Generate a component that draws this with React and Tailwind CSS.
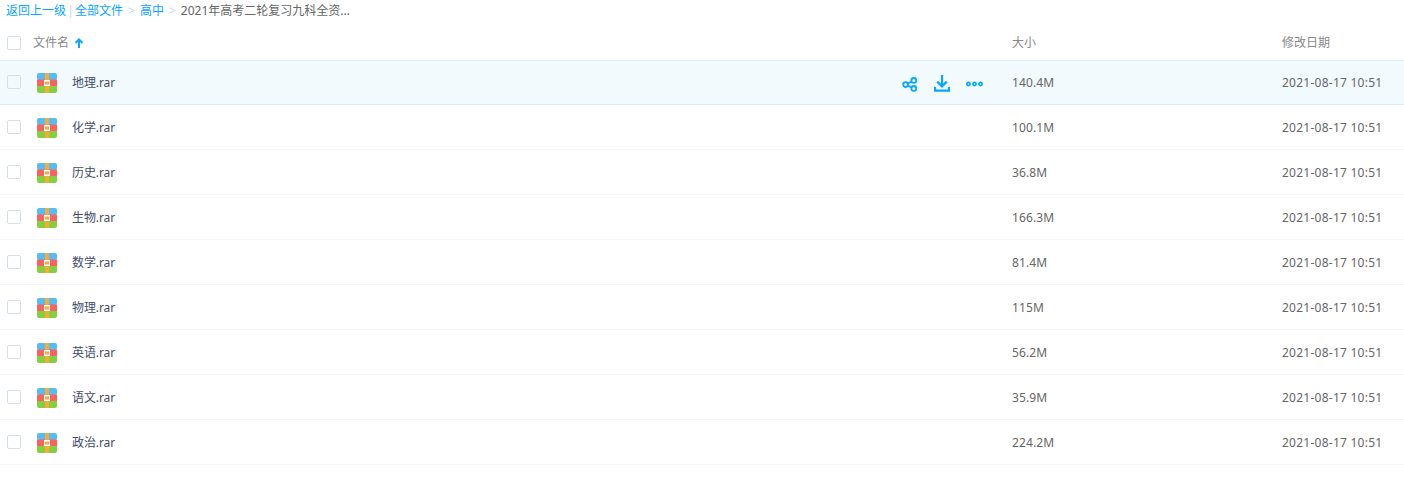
import { useState } from 'react';

const files = [
  { name: '地理.rar', size: '140.4M' },
  { name: '化学.rar', size: '100.1M' },
  { name: '历史.rar', size: '36.8M' },
  { name: '生物.rar', size: '166.3M' },
  { name: '数学.rar', size: '81.4M' },
  { name: '物理.rar', size: '115M' },
  { name: '英语.rar', size: '56.2M' },
  { name: '语文.rar', size: '35.9M' },
  { name: '政治.rar', size: '224.2M' },
];

const checkbox = "w-[14px] h-[14px] rounded-[2px] border border-[#d5dfea] bg-transparent shrink-0";

function RarIcon() {
  return (
    <svg width="20" height="20" viewBox="0 0 20 20" className="shrink-0">
      <rect x="0" y="0" width="20" height="7" rx="2" fill="#55bdf5" />
      <rect x="0" y="6.5" width="20" height="7" fill="#f9625f" />
      <rect x="0" y="13" width="20" height="7" rx="2" fill="#84cf3f" />
      <rect x="0" y="13" width="20" height="3" fill="#84cf3f" />
      <rect x="8" y="0" width="4" height="20" fill="#fbaa36" />
      <rect x="7" y="7" width="6" height="6" fill="#fff" />
      <rect x="8" y="8.5" width="4" height="3" fill="#fbaa36" />
    </svg>
  );
}

function ShareIcon() {
  return (
    <svg width="16" height="16" viewBox="0 0 16 16" fill="none" stroke="#06a7ff" strokeWidth="1.8">
      <circle cx="3.6" cy="8.6" r="2.4" />
      <circle cx="11.8" cy="4.4" r="2.4" />
      <circle cx="11.8" cy="12.4" r="2.4" />
      <path d="M5.8 7.5 9.6 5.5M5.8 9.7 9.6 11.3" />
    </svg>
  );
}

function DownloadIcon() {
  return (
    <svg width="16" height="17" viewBox="0 0 16 17" fill="none" stroke="#06a7ff" strokeWidth="2.2">
      <path d="M8 0v11M3.2 6.6 8 11.4 12.8 6.6" />
      <path d="M1 12v3.6h14V12" strokeWidth="2.2" />
    </svg>
  );
}

function MoreIcon() {
  return (
    <svg width="17" height="6" viewBox="0 0 17 6" fill="none" stroke="#06a7ff" strokeWidth="1.7">
      <circle cx="2.5" cy="3" r="1.6" />
      <circle cx="8.5" cy="3" r="1.6" />
      <circle cx="14.5" cy="3" r="1.6" />
    </svg>
  );
}

function Row({ file, active }) {
  return (
    <div className={`flex items-center h-[45px] border-t border-b ${active ? 'bg-[#f3fafe] border-[#dcedfa]' : 'border-t-transparent border-b-[#f2f6fd]'}`}>
      <div className="w-[33px] pl-[7px] flex -mt-[2px]">
        <span className={checkbox} />
      </div>
      <div className="w-[979px] flex items-center">
        <span className="ml-[4px] mt-[1px] flex"><RarIcon /></span>
        <span className="ml-[15px] text-[#424e67] tracking-[-0.1px]">{file.name}</span>
        {active && (
          <div className="ml-auto mr-[29px] flex items-center gap-4 mt-[2px]">
            <ShareIcon />
            <DownloadIcon />
            <MoreIcon />
          </div>
        )}
      </div>
      <div className="w-[270px] text-[#666] tracking-[0.1px]">{file.size}</div>
      <div className="text-[#666] tracking-[0.25px]">2021-08-17 10:51</div>
    </div>
  );
}

export default function App() {
  const [sortAsc] = useState(true);

  return (
    <div className="w-[1404px] h-[480px] bg-white text-xs font-['Noto_Sans','Noto_Sans_CJK_SC',sans-serif] overflow-hidden">
      <div className="flex items-center h-[21px] pl-[6px] text-[#666]">
        <span className="text-[#06a7ff]">返回上一级</span>
        <span className="w-[9px] text-center text-[#c4d8f4]">|</span>
        <span className="text-[#06a7ff]">全部文件</span>
        <span className="mx-[5px] text-[#c4d8f4]">&gt;</span>
        <span className="text-[#06a7ff]">高中</span>
        <span className="mx-[5px] text-[#c4d8f4]">&gt;</span>
        <span>2021年高考二轮复习九科全资...</span>
      </div>
      <div className="flex items-center h-[39px] pt-[5px] text-[#888]">
        <div className="w-[33px] pl-[7px] flex">
          <span className={checkbox} />
        </div>
        <div className="w-[979px] flex items-center">
          <span>文件名</span>
          {sortAsc && (
            <svg width="10" height="10" viewBox="0 0 10 10" className="ml-[5px]" fill="none" stroke="#06a7ff" strokeWidth="2">
              <path d="M5 10V2M1.5 5 5 1.5 8.5 5" />
            </svg>
          )}
        </div>
        <div className="w-[270px]">大小</div>
        <div>修改日期</div>
      </div>
      {files.map((file, i) => (
        <Row key={file.name} file={file} active={i === 0} />
      ))}
    </div>
  );
}
